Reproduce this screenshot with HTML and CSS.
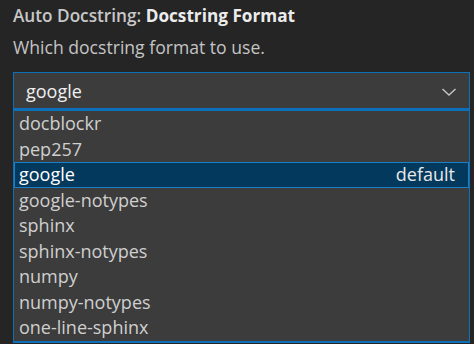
FILE: index.html
```html
<!DOCTYPE html>
<html>
<head>
<meta charset="utf-8">
<link rel="stylesheet" href="styles.css">
</head>
<body>
<div class="setting">
  <div class="title"><span class="cat">Auto Docstring: </span><span class="label">Docstring Format</span></div>
  <div class="desc">Which docstring format to use.</div>
  <div class="select">
    <div class="box">
      <span class="value">google</span>
      <svg class="chev" width="16" height="10" viewBox="0 0 16 10"><path d="M1.5 2 L8 8 L14.5 2" fill="none" stroke="#c5c5c5" stroke-width="1.4"/></svg>
    </div>
    <ul class="list">
      <li>docblockr</li>
      <li>pep257</li>
      <li class="active"><span>google</span><span class="tag">default</span></li>
      <li>google-notypes</li>
      <li>sphinx</li>
      <li>sphinx-notypes</li>
      <li>numpy</li>
      <li>numpy-notypes</li>
      <li>one-line-sphinx</li>
    </ul>
  </div>
</div>
</body>
</html>
```

FILE: styles.css
```css
html, body {
  margin: 0;
  padding: 0;
  background: #252526;
  width: 474px;
  height: 344px;
  overflow: hidden;
}
.setting {
  padding: 4px 4px 0 13px;
  font-family: "Open Sans", "Noto Sans", sans-serif;
  color: #cccccc;
}
.title {
  font-size: 17.2px;
  font-weight: 600;
  line-height: 24px;
  height: 24px;
}
.cat { color: #c8c8c8; }
.label { color: #ececec; font-weight: 700; }
.desc {
  font-size: 17.6px;
  line-height: 24px;
  margin-top: 7px;
  color: #c4c4c4;
}
.select {
  margin-top: 13px;
  width: 457px;
}
.box {
  border: 1px solid #0e70b8;
  background: #3c3c3c;
  display: flex;
  align-items: center;
  justify-content: space-between;
  padding: 0 12px 0 12px;
  box-sizing: border-box;
  height: 37px;
}
.value {
  font-size: 18px;
  color: #f0f0f0;
}
.chev { margin-top: 2px; }
.list {
  list-style: none;
  margin: 0;
  padding: 0;
  background: #3c3c3c;
  border: 1px solid #0e70b8;
  border-top: 2px solid #0e70b8;
  border-bottom: 2px solid #0e70b8;
}
.list li {
  height: 25.5px;
  line-height: 25px;
  font-size: 18px;
  padding: 0 14px 0 5px;
  display: flex;
  justify-content: space-between;
  color: #cfcfcf;
  box-sizing: border-box;
}
.list li.active {
  background: #04395e;
  border: 1px solid #1a7fc7;
  padding: 0 13px 0 4px;
  line-height: 23px;
  color: #ffffff;
}
.tag { color: #e8e8e8; }
```
